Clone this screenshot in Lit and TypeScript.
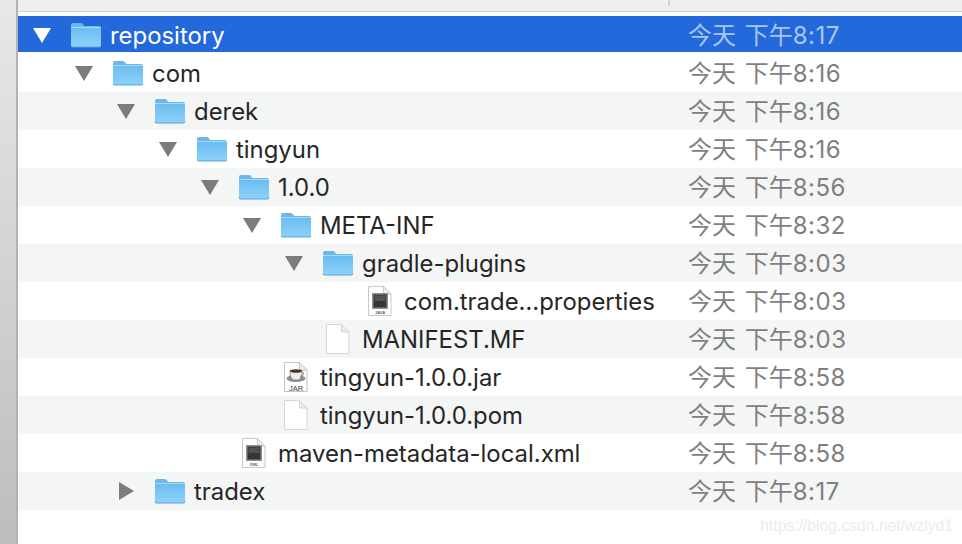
import { LitElement, html, css, svg } from "lit";
import { customElement } from "lit/decorators.js";

type Kind = "folder" | "java" | "plain" | "jar" | "xml";
interface Row { name: string; depth: number; time: string; kind: Kind; arrow?: "down" | "right"; }

const ROWS: Row[] = [
  { name: "repository", depth: 0, time: "8:17", kind: "folder", arrow: "down" },
  { name: "com", depth: 1, time: "8:16", kind: "folder", arrow: "down" },
  { name: "derek", depth: 2, time: "8:16", kind: "folder", arrow: "down" },
  { name: "tingyun", depth: 3, time: "8:16", kind: "folder", arrow: "down" },
  { name: "1.0.0", depth: 4, time: "8:56", kind: "folder", arrow: "down" },
  { name: "META-INF", depth: 5, time: "8:32", kind: "folder", arrow: "down" },
  { name: "gradle-plugins", depth: 6, time: "8:03", kind: "folder", arrow: "down" },
  { name: "com.trade…properties", depth: 7, time: "8:03", kind: "java" },
  { name: "MANIFEST.MF", depth: 6, time: "8:03", kind: "plain" },
  { name: "tingyun-1.0.0.jar", depth: 5, time: "8:58", kind: "jar" },
  { name: "tingyun-1.0.0.pom", depth: 5, time: "8:58", kind: "plain" },
  { name: "maven-metadata-local.xml", depth: 4, time: "8:58", kind: "xml" },
  { name: "tradex", depth: 2, time: "8:17", kind: "folder", arrow: "right" },
];

const folderIcon = (id: string) => svg`
  <svg class="icon folder" width="32" height="26" viewBox="0 0 32 26">
    <defs>
      <linearGradient id=${id} x1="0" y1="0" x2="0" y2="1">
        <stop offset="0" stop-color="#6cbcf0"/>
        <stop offset="1" stop-color="#8dd3fb"/>
      </linearGradient>
    </defs>
    <path d="M1 3C1 1.800 1.800 1 3 1h7.500c1.200 0 1.800.5 2.600 1.500L14.200 4H29c1.200 0 2 .8 2 2v17c0 1.200-.8 2-2 2H3c-1.200 0-2-.8-2-2z" fill="#6db8ea"/>
    <path d="M1 6h30v17c0 1.200-.8 2-2 2H3c-1.200 0-2-.8-2-2z" fill="url(#${id})"/>
    <rect x="1" y="5" width="30" height="1" fill="#a5daf9"/>
    <path d="M1 23.500c0 1 .8 1.500 2 1.500h26c1.200 0 2-.5 2-1.500" fill="none" stroke="#5c9fd0" stroke-width="1"/>
  </svg>`;

const page = (edge: string) => svg`
  <path d="M1.500 1.500H16.500L24 9V30.500H1.500Z" fill="#fff" stroke=${edge}/>
  <path d="M16.500 1.500V9H24Z" fill="#ebebeb" stroke=${edge}/>`;

const docIcon = (kind: Kind) => {
  if (kind === "plain") return svg`<svg class="icon doc" width="25" height="32" viewBox="0 0 25 32">${page("#d6d6d6")}</svg>`;
  if (kind === "jar") return svg`<svg class="icon doc" width="25" height="32" viewBox="0 0 25 32">${page("#c4c4c4")}
    <ellipse cx="13" cy="17.500" rx="9.500" ry="3.500" fill="#8f8f8f"/>
    <path d="M7 9.500h12c0 4.500-1 8.500-3.500 9.500h-5c-2.500-1-3.500-5-3.500-9.500z" fill="#ececec" stroke="#6f6f6f" stroke-width=".7"/>
    <ellipse cx="13" cy="10" rx="6" ry="1.800" fill="#4c3320"/>
    <path d="M19 11.500c2.500-.5 2.500 3-1.500 4" fill="none" stroke="#777" stroke-width="1"/>
    <text x="13" y="29.500" class="tag jar">JAR</text></svg>`;
  const label = kind === "java" ? "JAVA" : "XML";
  return svg`<svg class="icon doc" width="25" height="32" viewBox="0 0 25 32">${page("#c8c8c8")}
    <rect x="5" y="8" width="16" height="16" fill="#909090"/>
    <rect x="6.500" y="9.500" width="13" height="13" fill="#343434"/>
    <rect x="7.500" y="10.500" width="11" height="5.500" fill="#525252"/>
    <text x="13" y="29" class="tag">${label}</text></svg>`;
};

@customElement("app-root")
export class AppRoot extends LitElement {
  static styles = css`
    :host { display: block; width: 962px; height: 544px; overflow: hidden; position: relative; background: #fff;
      font-family: "Inter", "Noto Sans CJK SC", sans-serif; }
    .page { display: flex; height: 544px; }
    .rail { width: 16px; flex: none; background: linear-gradient(#e8e8e8, #bdbdc0); border-right: 2px solid #b3b3b5; }
    .main { flex: 1; min-width: 0; display: flex; flex-direction: column; }
    .head { height: 11px; flex: none; background: #efefef; border-bottom: 1px solid #cfcfcf; display: flex; }
    .head i { width: 2px; height: 6px; margin-left: 650px; background: #d4d4d4; }
    .list { margin-top: 4px; }
    .row { height: 38px; display: flex; color: #262626; font-size: 23.900px; }
    .row.alt { background: #f4f5f5; }
    .row.sel { background: linear-gradient(#2369db 36px, #fff 36px); color: #fff; }
    .name { box-sizing: border-box; width: 670px; flex: none; display: flex; align-items: center; height: 38px; }
    .arrow { width: 18px; flex: none; margin-right: 20px; display: flex; justify-content: center; }
    .arrow svg { display: block; }
    .icon { display: block; flex: none; }
    .slot { width: 32px; flex: none; display: flex; justify-content: flex-start; }
    .folder { margin-left: -1px; }
    .doc { margin-left: 2px; }
    .label { margin-left: 7px; white-space: nowrap; }
    .time { color: #7f7f7f; line-height: 40px; white-space: nowrap; font-size: 24px; word-spacing: 2px; }
    .time b { font-weight: 400; letter-spacing: 0.500px; }
    .sel .time { color: #a9c5f4; line-height: 38px; padding-top: 1px; }
    .tag { font: 700 4px "Liberation Sans", sans-serif; fill: #666; text-anchor: middle; }
    .tag.jar { font: 400 7.500px "Liberation Sans", sans-serif; fill: #333; }
    .mark { position: absolute; right: 9px; top: 517px; font: 15.700px "Liberation Sans", sans-serif; color: #ececec; }
  `;

  render() {
    return html`<div class="page">
      <div class="rail"></div>
      <div class="main">
        <div class="head"><i></i></div>
        <div class="list">
          ${ROWS.map((r, i) => html`
            <div class="row ${i === 0 ? "sel" : ""} ${i % 2 === 0 && i > 0 ? "alt" : ""}">
              <div class="name" style="padding-left:${15 + 42 * r.depth}px">
                <div class="arrow">
                  ${r.arrow === "down"
                    ? svg`<svg width="18" height="15" viewBox="0 0 18 15"><path d="M0 0H18L9 15Z" fill="${i === 0 ? "#fff" : "#7c7c7c"}"/></svg>`
                    : r.arrow === "right"
                    ? svg`<svg width="15" height="18" viewBox="0 0 15 18"><path d="M0 0V18L15 9Z" fill="#7c7c7c"/></svg>`
                    : null}
                </div>
                <div class="slot">${r.kind === "folder" ? folderIcon("f" + i) : docIcon(r.kind)}</div>
                <span class="label">${r.name}</span>
              </div>
              <span class="time">今天 下午<b>${r.time}</b></span>
            </div>`)}
        </div>
      </div>
      <div class="mark">https://blog.csdn.net/wzlyd1</div>
    </div>`;
  }
}
